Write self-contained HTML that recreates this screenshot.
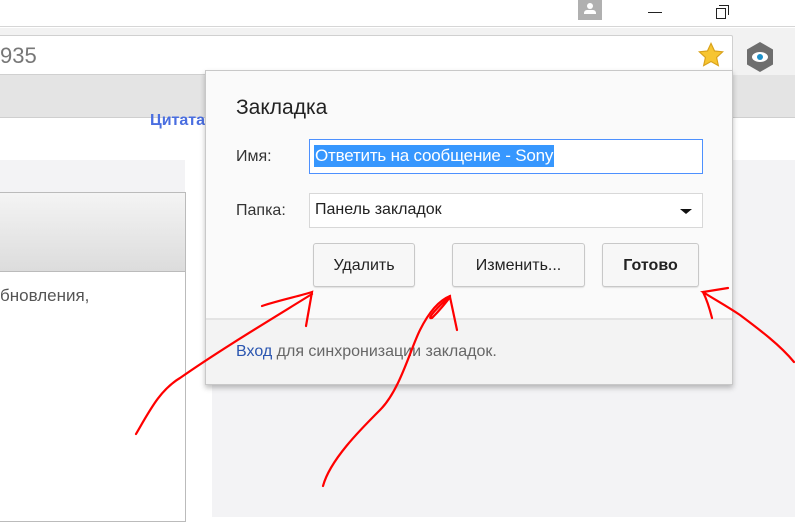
<!DOCTYPE html>
<html><head><meta charset="utf-8"><style>
*{margin:0;padding:0;box-sizing:border-box}
body{width:795px;height:517px;overflow:hidden;position:relative;background:#fff;font-family:"Liberation Sans","Noto Sans CJK SC",sans-serif}
.a{position:absolute}
.btn{position:absolute;top:243px;height:44px;border:1px solid #c8c8c8;border-radius:3px;background:#f7f7f7;font-size:16px;color:#222;text-align:center;line-height:44px;box-shadow:0 1px 1px rgba(0,0,0,.1)}
</style></head><body>
<div class="a" style="left:0;top:0;width:795px;height:27px;background:#fff;border-bottom:1px solid #d6d6d6"></div>
<div class="a" style="left:578px;top:0;width:24px;height:20px;background:#b0b0b0"></div>
<div class="a" style="left:587px;top:3px;width:6px;height:6px;border-radius:50%;background:#fff"></div>
<div class="a" style="left:584px;top:10px;width:12px;height:4px;background:#fff;border-radius:3px 3px 0 0"></div>
<div class="a" style="left:648px;top:12px;width:14px;height:1px;background:#222"></div>
<div class="a" style="left:716px;top:8px;width:10px;height:11px;border:1px solid #222;background:#fff"></div>
<div class="a" style="left:719px;top:5px;width:10px;height:10px;border-top:1px solid #222;border-right:1px solid #222"></div>
<div class="a" style="left:0;top:28px;width:795px;height:47px;background:#f2f2f2"></div>
<div class="a" style="left:-5px;top:35px;width:738px;height:40px;background:#fff;border:1px solid #d0d0d0;border-radius:2px"></div>
<div class="a" style="left:0;top:43px;font-size:22px;color:#777">935</div>
<svg class="a" style="left:697px;top:41px" width="28" height="28" viewBox="0 0 24 24"><path d="M12 2l3 6.5 7 .8-5.2 4.8 1.5 7L12 17.6 5.7 21.1l1.5-7L2 9.3l7-.8z" fill="#f7c531" stroke="#d9a21b" stroke-width="1"/></svg>
<svg class="a" style="left:745px;top:41px" width="30" height="32" viewBox="0 0 30 32"><path d="M15 1l13 7.5v15L15 31 2 23.5v-15z" fill="#6e6e6e"/><ellipse cx="15" cy="16" rx="8" ry="5" fill="#fff"/><circle cx="15" cy="16" r="3" fill="#1e90c8"/></svg>
<div class="a" style="left:0;top:75px;width:795px;height:43px;background:#e4e4e4;border-bottom:1px solid #cfcfcf"></div>
<div class="a" style="left:0;top:160px;width:795px;height:357px;background:#f3f3f5"></div>
<div class="a" style="left:185px;top:160px;width:27px;height:357px;background:#fff"></div>
<div class="a" style="left:150px;top:112px;font-size:16px;color:#4a6ee0;font-weight:bold">Цитата</div>
<div class="a" style="left:-2px;top:192px;width:188px;height:330px;background:#fff;border:1px solid #bbb"></div>
<div class="a" style="left:-1px;top:193px;width:186px;height:79px;background:linear-gradient(#f4f4f4,#dcdcdc);border-bottom:1px solid #bbb"></div>
<div class="a" style="left:0;top:286px;font-size:17px;color:#555">бновления,</div>
<div class="a" style="left:205px;top:70px;width:528px;height:315px;background:#fafafa;border:1px solid #c8c8c8;box-shadow:0 3px 5px rgba(0,0,0,.25)"></div>
<div class="a" style="left:206px;top:318px;width:526px;height:66px;background:#f3f3f3;border-top:2px solid #e4e4e4"></div>
<div class="a" style="left:236px;top:96px;font-size:21px;color:#222">Закладка</div>
<div class="a" style="left:236px;top:148px;font-size:16px;color:#333">Имя:</div>
<div class="a" style="left:309px;top:139px;width:394px;height:35px;border:1px solid #4d90fe;background:#fff"></div>
<div class="a" style="left:314px;top:145px;height:22px;line-height:22px;font-size:17px;color:#fff;background:#3797fe;padding:0 1px;letter-spacing:-.2px">Ответить на сообщение - Sony</div>
<div class="a" style="left:236px;top:202px;font-size:16px;color:#333">Папка:</div>
<div class="a" style="left:309px;top:193px;width:394px;height:35px;border:1px solid #d8d8d8;background:#fff"></div>
<div class="a" style="left:315px;top:201px;font-size:16px;color:#222">Панель закладок</div>
<div class="a" style="left:680px;top:209px;width:0;height:0;border-left:6px solid transparent;border-right:6px solid transparent;border-top:5px solid #111"></div>
<div class="btn" style="left:313px;width:102px">Удалить</div>
<div class="btn" style="left:452px;width:133px">Изменить...</div>
<div class="btn" style="left:602px;width:97px;font-weight:bold">Готово</div>
<div class="a" style="left:236px;top:343px;font-size:16px;color:#666"><span style="color:#2a55b0">Вход</span> для синхронизации закладок.</div>
<svg class="a" style="left:0;top:0" width="795" height="517" fill="none" stroke="#f00" stroke-width="2.2" stroke-linecap="round">
<path d="M136 434C150 410 160 390 180 378C220 350 270 320 312 294"/>
<path d="M262 306C280 300 300 296 312 292L306 326"/>
<path d="M323 486C330 460 360 430 380 410C400 390 410 350 420 330C430 310 440 300 450 296"/>
<path d="M450 296C440 305 425 320 432 318C440 310 448 300 450 297L457 330"/>
<path d="M794 362C780 345 760 330 740 315C725 305 712 298 703 292L728 288M703 292C707 300 710 310 712 318"/>
</svg>
</body></html>
